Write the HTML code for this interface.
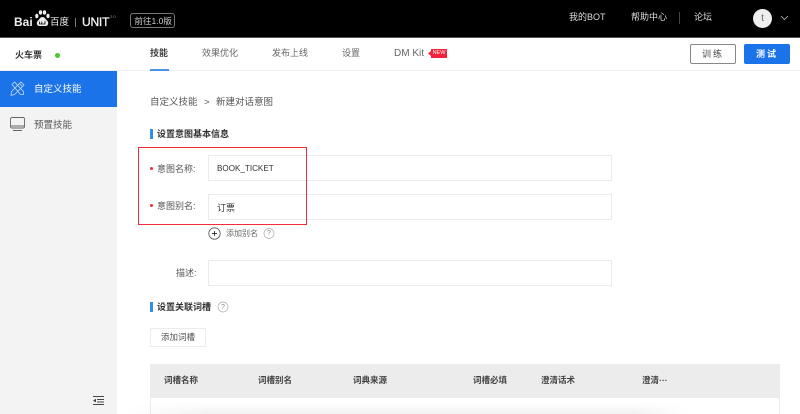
<!DOCTYPE html>
<html lang="zh"><head><meta charset="utf-8"><title>UNIT</title>
<style>
html,body{margin:0;padding:0;background:#fff}
#p{position:relative;width:800px;height:414px;overflow:hidden;background:#fff;font-family:"Liberation Sans","Noto Sans CJK SC",sans-serif;color:#444;font-size:9px;filter:blur(.35px)}
#p div,#p span.a{position:absolute;white-space:nowrap;line-height:12px}
.b{background:#fff;border:1px solid #ebebeb;box-sizing:border-box}
svg{position:absolute;overflow:visible}
</style></head><body><div id="p">
<div style="left:0;top:0;width:800px;height:37px;background:#000"></div>
<div style="left:0;top:37px;width:800px;height:1px;background:#555"></div>
<div style="left:0;top:70px;width:800px;height:1px;background:#eee"></div>
<div style="left:0;top:71px;width:117px;height:343px;background:#f3f3f3"></div>
<div style="left:0;top:71px;width:117px;height:36px;background:#1a73e8"></div>

<div style="left:14px;top:16px;color:#eee;font-size:12px;font-weight:700">Bai</div>
<svg style="left:0;top:0" width="120" height="37"><g fill="#eee"><ellipse cx="36.800" cy="16" rx="1.600" ry="2.300"/><ellipse cx="40.500" cy="12.500" rx="1.700" ry="2.200"/><ellipse cx="44.500" cy="12.500" rx="1.700" ry="2.200"/><ellipse cx="48" cy="16" rx="1.600" ry="2.200"/><path d="M42.500 17c-2.500 0-3 2.500-4.500 3.500-2 1.800-1.500 5.500 1.500 5.500h6c3 0 3.500-3.700 1.500-5.500-1.500-1-2-3.500-4.500-3.500z"/></g><path d="M39.500 21.500v2.500h5.500v-3M41.800 21.500v2.500" fill="none" stroke="#000" stroke-width=".8"/><path d="M75.500 18v9" stroke="#999" stroke-width=".8"/></svg>
<div style="left:50px;top:16.500px;color:#eee;font-size:9.500px">百度</div>
<div style="left:82px;top:16px;color:#f4f4f4;font-size:12px;letter-spacing:-.2px;-webkit-text-stroke:.3px #f4f4f4">UNIT</div>
<div style="left:110px;top:11px;color:#999;font-size:4px">2.0</div>
<div style="left:130px;top:13px;width:45px;height:15px;border:1px solid #777;border-radius:3px;box-sizing:border-box"></div>
<div style="left:134.500px;top:14.500px;color:#ccc;font-size:8.500px">前往1.0版</div>

<div style="left:569px;top:11px;color:#ddd;font-size:9px">我的BOT</div>
<div style="left:631px;top:11px;color:#ddd;font-size:9px">帮助中心</div>
<div style="left:679px;top:12px;width:1px;height:12px;background:#444"></div>
<div style="left:694px;top:11px;color:#ddd;font-size:9px">论坛</div>
<div style="left:753px;top:9px;width:19px;height:19px;border-radius:50%;background:#eee;color:#666;text-align:center;line-height:19px;font-size:10px">t</div>
<svg style="left:780px;top:15px" width="10" height="6"><path d="M1 1l3.500 3.500L8 1" fill="none" stroke="#bbb" stroke-width=".8"/></svg>

<div style="left:15px;top:49px;color:#333;font-size:9px;font-weight:700">火车票</div>
<div style="left:55px;top:53px;width:5px;height:5px;border-radius:50%;background:#4cc72e"></div>
<div style="left:150px;top:47px;color:#444;font-size:9px;font-weight:700">技能</div>
<div style="left:150px;top:69px;width:19px;height:2px;background:#4a90e8"></div>
<div style="left:202px;top:47px;color:#666;font-size:9px">效果优化</div>
<div style="left:272px;top:47px;color:#666;font-size:9px">发布上线</div>
<div style="left:342px;top:47px;color:#666;font-size:9px">设置</div>
<div style="left:394px;top:47.500px;color:#666;font-size:10px">DM Kit</div>
<div style="left:431px;top:49px;width:16px;height:9px;background:#f5213a;color:#fff;font-size:5.500px;line-height:9px;text-align:center">NEW</div>
<svg style="left:428px;top:51px" width="4" height="5"><path d="M3 0L0 2.500 3 5z" fill="#f5213a"/></svg>

<div style="left:690px;top:44px;width:46px;height:20px;box-sizing:border-box;border:1px solid #888;border-radius:2px;text-align:center;line-height:18px;color:#444;font-size:9px;letter-spacing:2px">训练</div>
<div style="left:744px;top:44px;width:46px;height:20px;border-radius:2px;background:#1a73e8;color:#fff;text-align:center;line-height:20px;font-size:9px;letter-spacing:2px;font-weight:700">测试</div>

<svg style="left:10px;top:80px" width="16" height="16" fill="none" stroke="#c9dcf8" stroke-width=".8"><path d="M1.500 11.500L11 2l3 3-9.500 9.500-3.500.8zM9.500 3.500l3 3M2 4.500L4.500 2l9 9.500v3h-3z"/></svg>
<div style="left:34px;top:84px;color:#fff;font-size:9.500px">自定义技能</div>
<svg style="left:10px;top:117px" width="16" height="16" fill="none" stroke="#666" stroke-width=".9"><rect x=".5" y=".5" width="14" height="10.500" rx="1.500"/><path d="M.5 9h14M3 13.500h9"/></svg>
<div style="left:34px;top:120px;color:#555;font-size:9.500px">预置技能</div>
<svg style="left:93px;top:396px" width="11" height="10" fill="#444"><rect y="0" width="11" height="1"/><rect x="4" y="3" width="7" height="1"/><rect x="4" y="5.500" width="7" height="1"/><rect y="8" width="11" height="1"/><path d="M3 2.800v3.600L0 4.600z"/></svg>

<div style="left:150px;top:97px;color:#555;font-size:9.500px">自定义技能</div>
<div style="left:204px;top:97px;color:#555;font-size:9.500px">&gt;</div>
<div style="left:216px;top:97px;color:#555;font-size:9.500px">新建对话意图</div>

<div style="left:150px;top:129px;width:3px;height:10px;background:#2f8fee"></div>
<div style="left:157px;top:128px;color:#333;font-size:9px;font-weight:700">设置意图基本信息</div>

<div class="b" style="left:208px;top:155px;width:404px;height:26px"></div>
<div class="b" style="left:208px;top:194px;width:404px;height:26px"></div>
<div class="b" style="left:208px;top:260px;width:404px;height:26px"></div>
<div style="left:217px;top:163px;color:#333;font-size:8.100px">BOOK_TICKET</div>
<div style="left:217px;top:202px;color:#333;font-size:9px">订票</div>
<div style="left:150px;top:167px;width:3px;height:3px;border-radius:50%;background:#e33"></div>
<div style="left:150px;top:204px;width:3px;height:3px;border-radius:50%;background:#e33"></div>
<div style="left:157px;top:163px;color:#555;font-size:9px">意图名称:</div>
<div style="left:157px;top:200px;color:#555;font-size:9px">意图别名:</div>
<div style="left:138px;top:147px;width:169px;height:78px;box-sizing:border-box;border:1px solid #f02b3c"></div>

<svg style="left:208px;top:227px" width="70" height="14" fill="none"><circle cx="6.500" cy="6.500" r="5.700" stroke="#555" stroke-width=".8"/><path d="M4 6.500h5M6.500 4v5" stroke="#333" stroke-width=".9"/><circle cx="61" cy="6.500" r="5" stroke="#aaa" stroke-width=".7"/></svg>
<div style="left:226px;top:227.500px;color:#666;font-size:8px">添加别名</div>
<div style="left:267px;top:227.500px;color:#888;font-size:7px">?</div>

<div style="left:176px;top:267px;color:#555;font-size:9px">描述:</div>

<div style="left:150px;top:302px;width:3px;height:10px;background:#2f8fee"></div>
<div style="left:157px;top:301px;color:#333;font-size:9px;font-weight:700">设置关联词槽</div>
<svg style="left:217px;top:301px" width="12" height="12" fill="none"><circle cx="6" cy="6" r="5" stroke="#aaa" stroke-width=".7"/></svg>
<div style="left:221px;top:301.500px;color:#888;font-size:7px">?</div>

<div class="b" style="left:150px;top:328px;width:56px;height:19px;text-align:center;line-height:17px;color:#555;font-size:8.500px">添加词槽</div>

<div style="left:150px;top:364px;width:630px;height:50px;box-sizing:border-box;border:1px solid #ebebeb;border-bottom:0"></div>
<div style="left:150px;top:364px;width:630px;height:34px;background:#ececec"></div>
<div style="left:164px;top:374px;color:#444;font-size:8.500px;font-weight:700">词槽名称</div>
<div style="left:258px;top:374px;color:#444;font-size:8.500px;font-weight:700">词槽别名</div>
<div style="left:353px;top:374px;color:#444;font-size:8.500px;font-weight:700">词典来源</div>
<div style="left:473px;top:374px;color:#444;font-size:8.500px;font-weight:700">词槽必填</div>
<div style="left:541px;top:374px;color:#444;font-size:8.500px;font-weight:700">澄清话术</div>
<div style="left:642px;top:374px;color:#444;font-size:8.500px;font-weight:700">澄清···</div>

<div style="left:125px;top:402px;width:565px;height:12px;background:linear-gradient(to bottom,rgba(0,0,0,0),rgba(0,0,0,.05));-webkit-mask-image:linear-gradient(to right,transparent,#000 15%,#000 90%,transparent)"></div>
</div></body></html>
